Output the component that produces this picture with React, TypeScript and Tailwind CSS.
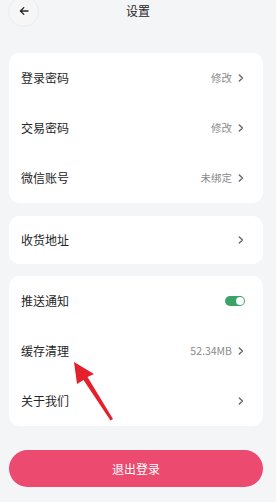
import React from "react";

function Chevron() {
  return (
    <svg width="6" height="8" viewBox="0 0 6 8" className="ml-[6px]">
      <path d="M1.3 1 L4.5 4 L1.3 7" fill="none" stroke="#666" strokeWidth="1.4" strokeLinecap="round" strokeLinejoin="round" />
    </svg>
  );
}

function Row({ label, value, h = "h-[50px]", chevron = true, children }: { label: string; value?: string; h?: string; chevron?: boolean; children?: React.ReactNode }) {
  return (
    <div className={`${h} flex items-center pl-[12px] pr-[19px]`}>
      <span className="text-[12px] text-[#262626] flex-1">{label}</span>
      {value && <span className="text-[10.5px] text-[#8a8a8a]">{value}</span>}
      {children}
      {chevron && <Chevron />}
    </div>
  );
}

export default function App() {
  return (
    <div className="relative w-[276px] h-[502px] bg-[#f4f5f7] overflow-hidden" style={{ fontFamily: '"Noto Sans CJK SC", "Noto Sans", sans-serif' }}>
      <div className="grid grid-cols-[1fr_auto_1fr] grid-rows-[22px] items-center h-[22px] px-[8px]">
        <div className="h-[22px] flex items-center">
          <div className="w-[31px] h-[31px] shrink-0 rounded-full border border-[#ebebeb] bg-[#f6f6f7] flex items-center justify-center">
            <svg width="10" height="10" viewBox="0 0 10 10">
              <path d="M9 5 H1.5 M4.8 1.6 L1.4 5 L4.8 8.4" fill="none" stroke="#222" strokeWidth="1.3" strokeLinecap="round" strokeLinejoin="round" />
            </svg>
          </div>
        </div>
        <div className="text-[12px] leading-[22px] text-[#262626]">设置</div>
        <div />
      </div>

      <div className="mt-[31px] ml-[9px] w-[254px] flex flex-col gap-[13px]">
        <div className="bg-white rounded-[10px]">
          <Row label="登录密码" value="修改" />
          <Row label="交易密码" value="修改" />
          <Row label="微信账号" value="未绑定" />
        </div>
        <div className="bg-white rounded-[10px]">
          <Row label="收货地址" h="h-[48px]" />
        </div>
        <div className="bg-white rounded-[10px] -mt-[1px]">
          <Row label="推送通知" chevron={false}>
            <div className="w-[20px] h-[10px] rounded-full bg-[#3ba369] flex items-center justify-end pr-[1px] mr-[-1px]">
              <div className="w-[8px] h-[8px] rounded-full bg-white" />
            </div>
          </Row>
          <Row label="缓存清理" value="52.34MB" />
          <Row label="关于我们" />
        </div>
      </div>

      <div className="mt-[24px] ml-[9px] w-[254px] h-[37px] rounded-full bg-[#ec4a6e] flex items-center justify-center text-white text-[12px]">
        退出登录
      </div>

      <svg className="absolute left-0 top-0 pointer-events-none" width="276" height="502" viewBox="0 0 276 502">
        <path d="M74 362 L94 374 L87.5 377 L113 419 L110.5 420.5 L83.5 380 L77 384 Z" fill="#e3202b" />
      </svg>
    </div>
  );
}
